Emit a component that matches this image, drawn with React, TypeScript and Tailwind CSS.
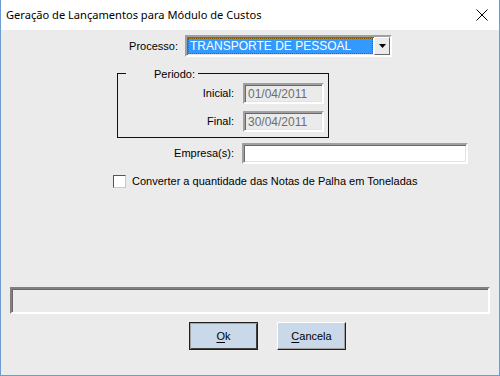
const sunken =
  'border-2 border-t-[#a0a0a0] border-l-[#a0a0a0] border-b-white border-r-white shadow-[inset_1px_1px_0_#696969,inset_-1px_-1px_0_#e3e3e3]';

function Edit({ value, disabled, width }: { value?: string; disabled?: boolean; width: string }) {
  return (
    <div
      className={`${sunken} ${width} h-[21px] flex items-center px-[3px] text-[12px] ${
        disabled ? 'bg-[#ebebeb] text-[#6d6d6d]' : 'bg-white text-black'
      }`}
    >
      {value}
    </div>
  );
}

function Button({ hot, rest, isDefault }: { hot: string; rest: string; isDefault?: boolean }) {
  return (
    <div
      className={`h-[28px] w-[69px] flex items-center justify-center bg-[#cad9ea] ${
        isDefault
          ? 'border border-[#202020] shadow-[inset_1px_1px_0_#a0a0a0,inset_-1px_-1px_0_#404040]'
          : 'border border-t-white border-l-white border-b-[#202020] border-r-[#202020] shadow-[inset_-1px_-1px_0_#a0a0a0]'
      }`}
    >
      <span>
        <span className="underline underline-offset-2">{hot}</span>
        {rest}
      </span>
    </div>
  );
}

export default function App() {
  return (
    <div className="w-[500px] h-[376px] flex flex-col border border-t-0 border-[#6f9bd2] bg-[#ebebeb] text-[11px] text-black font-['Liberation_Sans',Arial,sans-serif] overflow-hidden">
      {/* title bar */}
      <div className="h-[30px] bg-white flex items-center justify-between pl-[5px] pr-[10px] shrink-0">
        <span className="text-[11.1px] font-['Noto_Sans','Open_Sans',sans-serif] text-black">
          Geração de Lançamentos para Módulo de Custos
        </span>
        <svg width="12" height="12" viewBox="0 0 12 12" className="mr-[1px]">
          <path d="M0.5 0.5 L11.5 11.5 M11.5 0.5 L0.5 11.5" stroke="#000" strokeWidth="1" fill="none" />
        </svg>
      </div>

      {/* client */}
      <div className="flex flex-col flex-1">
        {/* Processo */}
        <div className="flex items-center mt-[5px] h-[22px]">
          <span className="w-[177px] text-right">Processo:</span>
          <div className={`${sunken} ml-[7px] w-[207px] h-[22px] flex bg-white`}>
            <div className="flex-1 m-[1px] bg-[#3399ff] text-white text-[12px] leading-none flex items-center pl-[2px] outline outline-1 outline-dotted outline-[#8a5a00] -outline-offset-1">
              TRANSPORTE DE PESSOAL
            </div>
            <div className="w-[16px] bg-[#ebebeb] border border-t-white border-l-white border-b-[#696969] border-r-[#696969] flex items-center justify-center">
              <svg width="7" height="4" viewBox="0 0 7 4">
                <path d="M0 0 H7 L3.5 4 Z" fill="#000" />
              </svg>
            </div>
          </div>
        </div>

        {/* Periodo group */}
        <div className="relative ml-[116px] mt-[16px] w-[212px] h-[65px] border border-[#101010] flex flex-col pt-[9px] gap-[7px]">
          <span className="absolute -top-[8px] left-[8px] w-[72px] bg-[#ebebeb] text-right pr-[3px]">Periodo:</span>
          <div className="flex items-center">
            <span className="w-[116px] text-right">Inicial:</span>
            <div className="ml-[9px]">
              <Edit value="01/04/2011" disabled width="w-[81px]" />
            </div>
          </div>
          <div className="flex items-center">
            <span className="w-[116px] text-right">Final:</span>
            <div className="ml-[9px]">
              <Edit value="30/04/2011" disabled width="w-[81px]" />
            </div>
          </div>
        </div>

        {/* Empresa */}
        <div className="flex items-center mt-[5px]">
          <span className="w-[233px] text-right">Empresa(s):</span>
          <div className="ml-[8px]">
            <Edit width="w-[226px]" />
          </div>
        </div>

        {/* checkbox */}
        <div className="flex items-center mt-[9px] ml-[112px]">
          <div className="w-[13px] h-[13px] bg-white border border-t-[#555] border-l-[#555] border-b-[#c8c8c8] border-r-[#c8c8c8]" />
          <span className="ml-[6px]">Converter a quantidade das Notas de Palha em Toneladas</span>
        </div>

        {/* status panel */}
        <div className="mx-[9px] mt-auto h-[27px] border-2 border-t-[#808080] border-l-[#808080] border-b-white border-r-white shadow-[inset_1px_1px_0_#6a6a6a]" />

        {/* buttons */}
        <div className="flex gap-[19px] mt-[8px] mb-[25px] ml-[188px]">
          <Button hot="O" rest="k" isDefault />
          <Button hot="C" rest="ancela" />
        </div>
      </div>
    </div>
  );
}
